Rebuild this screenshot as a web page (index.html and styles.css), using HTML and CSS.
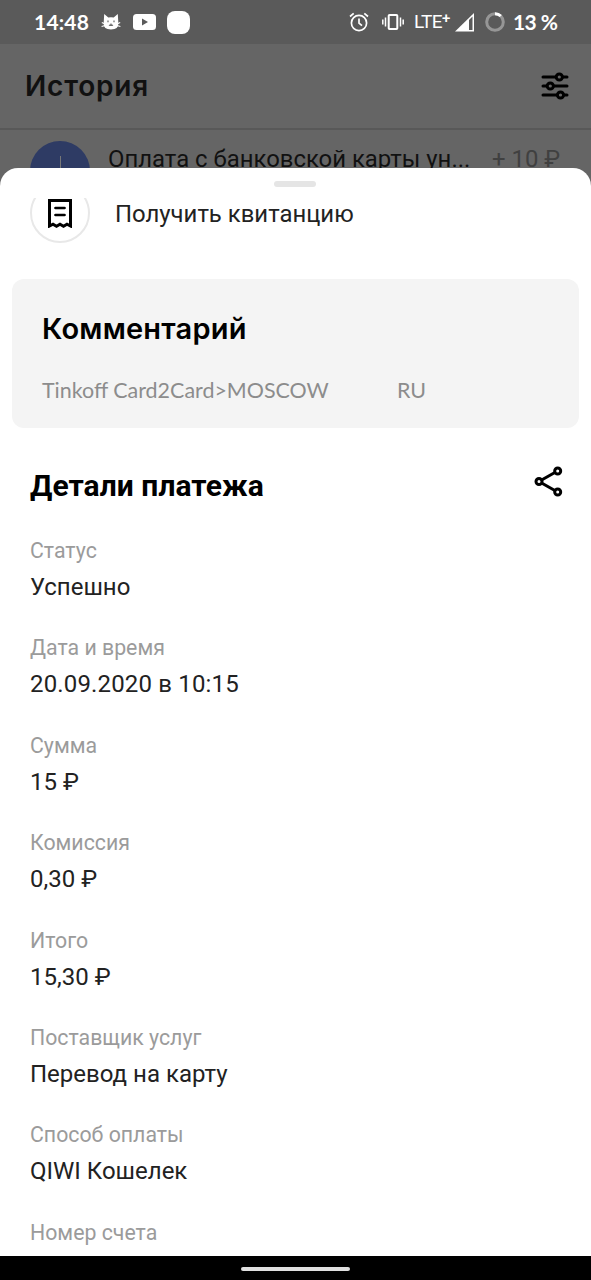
FILE: index.html
```html
<!DOCTYPE html>
<html lang="ru">
<head>
<meta charset="utf-8">
<title>История</title>
<link rel="stylesheet" href="styles.css">
</head>
<body>
<div class="screen">
  <header class="status">
    <span class="time">14:48</span>
    <svg class="cat" width="20" height="18" viewBox="0 0 20 18"><path d="M3.200 1L7.300 4.500Q10 4 12.700 4.500L16.800 1L17.300 9.500Q18 16.500 10 16.500Q2 16.500 2.700 9.500Z" fill="#fff"/><path d="M.8 9.500L4 11M.6 13.500L4 12.500M19.200 9.500L16 11M19.400 13.500L16 12.500" stroke="#fff" stroke-width="1.200"/><path d="M7 7.500v1.800M13 7.500v1.800M8 12Q9.500 13 10 11.500Q10.500 13 12 12" fill="none" stroke="#5a5a5a" stroke-width="1.100"/></svg>
    <svg class="tube" width="23" height="16" viewBox="0 0 23 16"><rect width="23" height="16" rx="3.500" fill="#fff"/><path d="M9 4.500v7l6-3.500z" fill="#5a5a5a"/></svg>
    <span class="app"></span>
    <span class="grow"></span>
    <svg class="alarm" width="20" height="20" viewBox="0 0 20 20" fill="none" stroke="#fff" stroke-width="1.700"><circle cx="10" cy="11" r="7.600"/><path d="M10 6.500v4.700l3 2.500M1 4.500L4.700 1.300M19 4.500L15.300 1.300"/></svg>
    <svg class="vibrate" width="22" height="18" viewBox="0 0 22 18" fill="none" stroke="#fff" stroke-width="1.500"><rect x="6.700" y="2" width="8.600" height="14" rx=".8" stroke-width="2"/><path d="M.8 6.500v5M3.500 4.500v9M18.500 4.500v9M21.200 6.500v5"/></svg>
    <span class="network">LTE<sup>+</sup></span>
    <svg class="signal" width="20" height="19" viewBox="0 0 20 19"><path d="M0 18.500L19 0V18.500Z" fill="#fff"/><path d="M14 7L17.500 3.600V17H14Z" fill="#5a5a5a"/></svg>
    <svg class="battery" width="20" height="20" viewBox="0 0 20 20" fill="none" stroke-width="3"><circle cx="10" cy="10" r="8.300" stroke="#969696"/><path d="M10 1.700A8.300 8.300 0 0 1 15.800 4" stroke="#fff"/></svg>
    <span class="percent">13 %</span>
  </header>
  <div class="toolbar">
    <h1 class="title">История</h1>
    <svg class="filter" width="28" height="28" viewBox="0 0 28 28" fill="#656565" stroke="#000" stroke-width="3" stroke-linecap="round"><path d="M2 5H26M2 14H26M2 23H26"/><circle cx="18.300" cy="5" r="3.100"/><circle cx="9.300" cy="14" r="3.100"/><circle cx="19.500" cy="23" r="3.100"/></svg>
  </div>
  <div class="entry">
    <div class="avatar"><span class="avatar-line"></span></div>
    <span class="entry-name">Оплата с банковской карты ун...</span>
    <span class="entry-sum">+ 10 ₽</span>
  </div>
  <main class="sheet">
    <div class="handle"></div>
    <div class="receipt">
      <div class="receipt-clip"><div class="receipt-circle"><svg width="24" height="29" viewBox="0 0 24 29" fill="none" stroke="#000" stroke-width="3"><path d="M1.500 27V1.500H22.500V27L19 25.200L15.500 27.200L12 25.200L8.500 27.200L5 25.200Z"/><path d="M7.500 9H16.500M7.500 16H16.500" stroke-width="2.700" stroke-linecap="round"/></svg></div></div>
      <span class="receipt-text">Получить квитанцию</span>
    </div>
    <section class="comment">
      <h2 class="comment-title">Комментарий</h2>
      <p class="comment-text"><span class="merchant">Tinkoff Card2Card&gt;MOSCOW</span><span class="country">RU</span></p>
    </section>
    <div class="details-head">
      <h2 class="details-title">Детали платежа</h2>
      <svg class="share" width="29" height="31" viewBox="0 0 29 31" fill="#fff" stroke="#000" stroke-width="3"><path d="M23.500 5L5 15.500L23.500 26"/><circle cx="23.700" cy="5" r="3"/><circle cx="5" cy="15.500" r="3"/><circle cx="23.700" cy="26" r="3"/></svg>
    </div>
    <dl class="details">
      <div class="field"><dt>Статус</dt><dd>Успешно</dd></div>
      <div class="field"><dt>Дата и время</dt><dd class="date">20.09.2020 в 10:15</dd></div>
      <div class="field"><dt>Сумма</dt><dd>15 ₽</dd></div>
      <div class="field"><dt>Комиссия</dt><dd>0,30 ₽</dd></div>
      <div class="field"><dt>Итого</dt><dd>15,30 ₽</dd></div>
      <div class="field"><dt>Поставщик услуг</dt><dd>Перевод на карту</dd></div>
      <div class="field"><dt>Способ оплаты</dt><dd>QIWI Кошелек</dd></div>
      <div class="field"><dt>Номер счета</dt></div>
    </dl>
  </main>
  <nav class="navbar"><span class="pill"></span></nav>
</div>
</body>
</html>
```
FILE: styles.css
```css
* { box-sizing: border-box; margin: 0; padding: 0; }
body { font-family: Roboto, sans-serif; }
svg { display: block; flex: none; }
.screen { position: relative; width: 591px; height: 1280px; overflow: hidden; background: #656565; white-space: nowrap; }
.status { display: flex; align-items: center; height: 44px; padding: 0 34px; background: #5a5a5a; color: #fff; }
.time, .percent { font: 700 21px/42px Lato, sans-serif; }
.time { width: 67px; letter-spacing: .2px; }
.percent { letter-spacing: -.6px; }
.tube { margin-left: 12px; }
.app { width: 23px; height: 23px; margin-left: 11px; border-radius: 8px; background: #fff; }
.grow { flex: 1; }
.vibrate { margin-left: 13px; }
.network { width: 36px; margin-left: 10px; font-size: 19px; font-weight: 400; line-height: 44px; letter-spacing: -.6px; }
.network sup { font-size: 15px; font-weight: 500; line-height: 0; vertical-align: 5px; }
.signal { margin-left: 5px; }
.battery { margin-left: 10px; }
.percent { width: 44px; margin-left: 8px; }
.toolbar { display: flex; align-items: center; justify-content: space-between; height: 86px; padding: 0 22px 0 25px; border-bottom: 2px solid #585858; }
.title { font: 600 28px/34px Inter, sans-serif; letter-spacing: .8px; color: #111; }
.entry { display: flex; padding: 11px 30px 0; }
.avatar { flex: none; width: 60px; height: 60px; padding: 15px 0 0 30px; border-radius: 50%; background: #2e3b64; }
.avatar-line { display: block; width: 1px; height: 18px; background: #777; }
.entry-name { width: 384px; margin-left: 18px; font-size: 23.900px; line-height: 36px; color: #111; }
.entry-sum { font-size: 23.900px; line-height: 36px; color: #404040; }
.sheet { position: absolute; top: 168px; left: 0; width: 591px; height: 1088px; overflow: hidden; border-radius: 18px 18px 0 0; background: #fff; }
.handle { width: 42px; height: 6px; margin: 13px 0 0 274px; border-radius: 3px; background: #e5e5e5; }
.receipt { display: flex; height: 92px; padding: 11px 30px 0; }
.receipt-clip { display: flex; align-items: flex-end; width: 60px; height: 45px; overflow: hidden; }
.receipt-circle { flex: none; display: flex; align-items: center; justify-content: center; width: 60px; height: 60px; border: 2px solid #e8e8e8; border-radius: 50%; }
.receipt-text { margin-left: 25px; font-size: 23.900px; line-height: 32px; color: #222; }
.comment { height: 149px; margin: 0 12px; padding: 32px 30px 0; border-radius: 12px; background: #f4f4f4; }
.comment-title { font: 600 29px/36px Inter, sans-serif; letter-spacing: .2px; color: #000; }
.comment-text { display: flex; margin-top: 28px; font: 400 21.450px/30px Lato, sans-serif; color: #8c8c8c; }
.merchant { width: 355px; }
.details-head { display: flex; justify-content: space-between; padding: 38px 28px 0 30px; }
.details-title { font-size: 30px; line-height: 40px; font-weight: 700; letter-spacing: .05px; color: #000; }
.details { padding: 30px 30px 0; }
.field { height: 97.400px; }
.field dt { font-size: 21.300px; line-height: 29px; color: #9b9b9b; }
.field dd { margin-top: 5px; font-size: 24px; line-height: 34px; color: #222; }
.field .date { letter-spacing: .16px; }
.navbar { position: absolute; bottom: 0; left: 0; display: flex; justify-content: center; width: 591px; height: 24px; padding-top: 11px; background: #000; }
.pill { width: 109px; height: 4px; border-radius: 2px; background: #e0e0e0; }
```
